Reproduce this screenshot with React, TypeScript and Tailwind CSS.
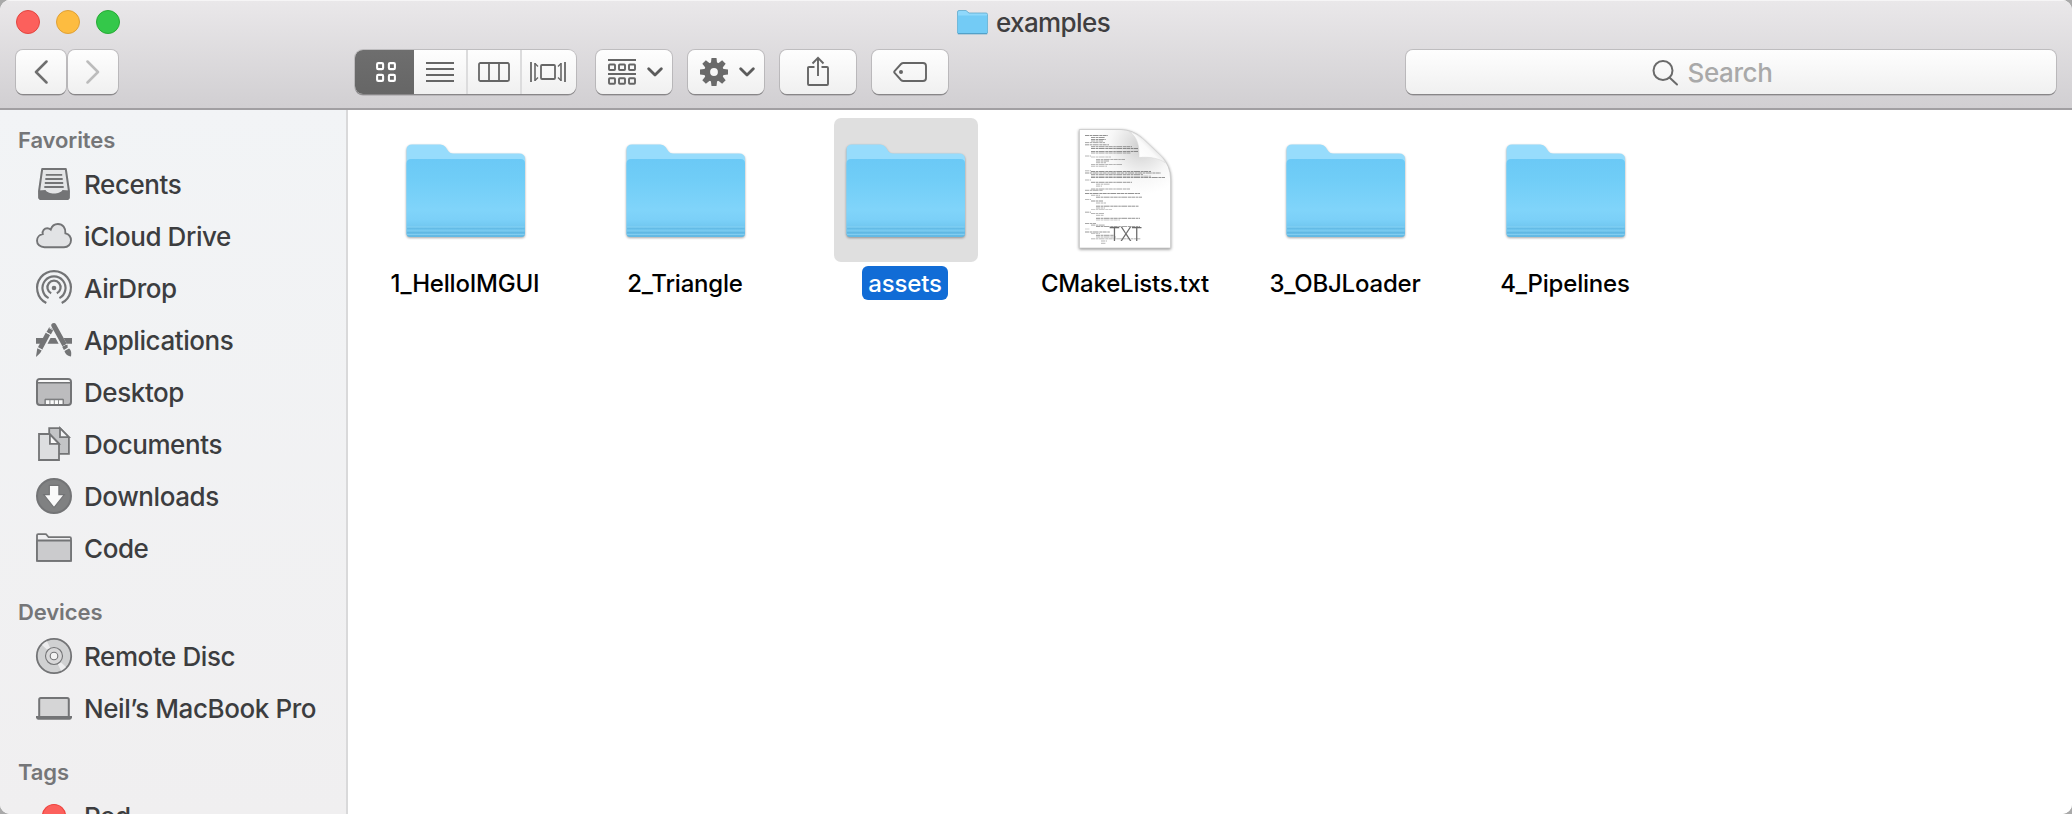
import type { ReactNode } from "react";

const G = "#737476";

function SideIcon({ children }: { children: ReactNode }) {
  return (
    <svg width="36" height="36" viewBox="0 0 36 36" fill="none" stroke={G} strokeWidth="2" className="shrink-0 overflow-visible">
      {children}
    </svg>
  );
}

const RecentsIcon = () => (
  <SideIcon>
    <path d="M6.2 2 H29.8 L32.8 23 L32.8 31 L31.5 32 H4.5 L3.2 31 V23 Z" fill="#e4e5e7" strokeLinejoin="round" />
    <path d="M2.2 23.5 L9.5 23 C11.5 27.6 24.5 27.6 26.5 23 L33.8 23.5 L33.4 30.5 Q33.2 33 31 33 H5 Q2.8 33 2.6 30.5 Z" fill={G} stroke="none" />
    <path d="M9.8 7.9 H26.2 M9.3 12 H26.7 M8.8 16 H27.2 M8.3 20 H27.7" strokeWidth="1.8" />
  </SideIcon>
);

const CloudIcon = () => (
  <SideIcon>
    <path d="M8.5 28.2 C4 28.2 1 25.3 1 21.7 C1 18.2 3.6 15.6 6.7 15.1 C6 11.5 8.5 9.3 11.2 9.3 C12.6 9.3 13.9 9.9 14.7 10.6 C15.9 7 18.6 5 21.9 5 C26.8 5 29.8 8.8 29.4 14.3 C32.9 15.2 35 18 35 21.3 C35 25.4 32 28.2 28 28.2 Z" fill="#e2e3e5" strokeWidth="1.9" />
  </SideIcon>
);

const AirDropIcon = () => (
  <SideIcon>
    <circle cx="18" cy="17" r="2.3" fill={G} stroke="none" />
    <g strokeWidth="2.2">
      <path d="M10.3 32 A16.9 16.9 0 1 1 25.7 32" />
      <path d="M12.6 27.1 A11.5 11.5 0 1 1 23.4 27.1" />
      <path d="M15.2 22.3 A6.6 6.6 0 1 1 20.8 22.3" />
    </g>
  </SideIcon>
);

const ApplicationsIcon = () => (
  <SideIcon>
    <path d="M0 15 H7.9 L4.9 20.7 H0 Z M14.5 15 H19.5 L22.6 20.7 H11.5 Z M27.6 15 H36 V20.7 H30.8 Z" fill={G} stroke="none" />
    <path d="M15.4 5.4 L12.7 10.3" strokeWidth="5" />
    <path d="M11.9 10.9 L4 25.6" strokeWidth="5" />
    <path d="M1.3 25.2 L5.7 27.6 L4.2 30 L0.4 33.8 L0 33.4 Z" fill={G} stroke="none" />
    <path d="M17.8 2.5 L29 22.8" strokeWidth="5" strokeLinecap="round" />
    <path d="M25.8 24 L31 21.2" stroke="#f3f4f6" strokeWidth="1" />
    <path d="M26.2 23.8 L30.2 21.8 L31.9 24.6 L27.9 26.9 Z M28.5 28 L33 25.6 C35.8 27.8 35.4 30.8 35 33.6 C32.4 33 29.3 31.6 28.5 28 Z" fill={G} stroke="none" />
    <path d="M13.3 4.9 L16.8 6.8 M10.7 9.5 L14.3 11.5 M1.9 24.5 L6 26.8" stroke="#f3f4f6" strokeWidth=".8" />
  </SideIcon>
);

const DesktopIcon = () => (
  <SideIcon>
    <rect x="1" y="4" width="34" height="26" rx="3" fill="#bcbcbe" />
    <path d="M2 7 Q2 5 4 5 H32 Q34 5 34 7 Z" fill="#fafafa" stroke="none" />
    <path d="M1 7.7 H35" strokeWidth="1.6" />
    <path d="M9 29 V24.2 H27.3 V29" strokeWidth="1" fill="#8b8c8e" />
    <path d="M9.9 25.2 h3.5 v3.9 h-3.5z M14.4 25.2 h3.4 v3.9 h-3.4z M18.8 25.2 h3.2 v3.9 h-3.2z M23 25.2 h3.5 v3.9 h-3.5z" fill="#fafafa" stroke="none" />
  </SideIcon>
);

const DocumentsIcon = () => (
  <SideIcon>
    <g strokeWidth="1.8">
      <path d="M13.2 1.2 H24 L32.9 10.4 V26.8 H13.2 Z" fill="#c3c4c6" />
      <path d="M24 1.2 V10.2 H32.9 Z" fill="#f3f4f6" />
      <path d="M3 7 H13.6 L23 16.6 V33 H3 Z" fill="#dddee0" />
      <path d="M13.9 7.4 V16.8 H23 Z" fill="#fafafa" />
    </g>
  </SideIcon>
);

const DownloadsIcon = () => (
  <SideIcon>
    <circle cx="18" cy="17" r="17" fill="#808182" />
    <path d="M13.3 6.3 H22.9 V15.7 H28.3 L18 28.6 L7.7 15.7 H13.3 Z" fill="#fafafa" stroke={G} strokeWidth="1.2" />
  </SideIcon>
);

const CodeIcon = () => (
  <SideIcon>
    <path d="M1 29.8 V4.3 Q1 3.2 2.1 3.2 H9.4 Q10.3 3.2 11 4.2 L12.6 6.2 H33.8 Q35 6.2 35 7.4 V29.8 Z" fill="#f0f0f2" strokeWidth="1.8" />
    <rect x="1" y="9.5" width="34" height="20.3" rx="1" fill="#cbcbcd" strokeWidth="1.8" />
  </SideIcon>
);

const DiscIcon = () => (
  <SideIcon>
    <circle cx="18" cy="18" r="17.2" fill="#d0d1d2" strokeWidth="1.8" />
    <path d="M18 18 L6 7 A16.3 16.3 0 0 1 11 3.3 Z M18 18 L30 29 A16.3 16.3 0 0 1 25 32.7 Z" fill="#ededee" stroke="none" />
    <circle cx="18" cy="18" r="8.5" fill="#d8d8d9" strokeWidth="1.1" />
    <circle cx="18" cy="18" r="3.8" fill="#f3f3f3" strokeWidth="1.1" />
  </SideIcon>
);

const LaptopIcon = () => (
  <SideIcon>
    <path d="M3.2 27 V9.6 Q3.2 8 4.8 8 H31.2 Q32.8 8 32.8 9.6 V27 Z" fill="#d5d5d6" />
    <path d="M0 26 H36 V27.6 Q35.6 29.8 33.6 29.8 H2.4 Q.4 29.8 0 27.6 Z" fill={G} stroke="none" />
  </SideIcon>
);

const RedTag = () => (
  <SideIcon>
    <circle cx="18" cy="18" r="11.5" fill="#fc605c" stroke="#ee443f" strokeWidth="1.2" />
  </SideIcon>
);

function Folder() {
  return (
    <svg width="120" height="94" viewBox="0 0 120 94" className="mt-px shrink-0 overflow-visible drop-shadow-[0_1px_1px_rgba(0,0,0,0.35)]">
      <defs>
        <linearGradient id="folderFront" x1="0" y1="0" x2="0" y2="1">
          <stop offset="0" stopColor="#6bc9f6" />
          <stop offset=".25" stopColor="#70cdf7" />
          <stop offset=".65" stopColor="#80d4fa" />
          <stop offset=".78" stopColor="#7bd0f8" />
          <stop offset=".88" stopColor="#70c6ef" />
          <stop offset="1" stopColor="#62b8e3" />
        </linearGradient>
      </defs>
      <path d="M0.500 90 V6 Q0.500 .5 6 .5 H34.500 Q37.500 .5 39.500 3 L42.500 7.500 Q44 9.500 47 9.500 H113 Q119 9.500 119 15 V90 Z" fill="#97dcfc" />
      <path d="M0.500 19.500 Q0.500 15 5 15 H114.500 Q119 15 119 19.500 V89.500 Q119 93 115.500 93 H4 Q0.500 93 0.500 89.500 Z" fill="url(#folderFront)" />
      <path d="M1 83 H118.500 M1 87 H118.500 M1 90.500 H118.500" stroke="#8fd6f5" strokeWidth=".9" opacity=".75" />
      <path d="M1 84.300 H118.500 M1 88.200 H118.500" stroke="#4ba6d3" strokeWidth=".8" opacity=".5" />
    </svg>
  );
}

const CODE_LINES: [number, number, number, number][] = [
  [6, 6.5, 23, 0.75], [12, 8.5, 14, 0.7], [12, 10.4, 15, 0.8], [12, 12, 12, 0.6], [6, 13.6, 20, 0.6],
  [6, 15.8, 24, 0.7], [12, 17.7, 41, 0.7], [12, 19.5, 47, 0.75], [12, 22.5, 47, 0.7], [12, 24, 40, 0.6],
  [6, 27, 6, 0.5], [12, 28, 20, 0.4], [17, 30.4, 29, 0.6], [17, 32, 13, 0.6], [17, 33.7, 10, 0.5],
  [12, 35.6, 31, 0.55], [12, 37.2, 16, 0.5], [6, 41.8, 6, 0.5], [12, 42.5, 60, 0.75], [6, 44, 76, 0.7],
  [12, 45.5, 52, 0.6], [12, 47.2, 60, 0.5], [12, 48.6, 74, 0.8], [6, 51, 6, 0.5], [12, 53.3, 41, 0.7],
  [17, 55.2, 14, 0.5], [17, 57.1, 6, 0.5], [12, 60, 39, 0.6], [6, 61.3, 18, 0.6], [6, 64.5, 55, 0.75],
  [12, 66.3, 9, 0.5], [17, 68.2, 46, 0.7], [6, 70.6, 6, 0.5], [12, 72, 12, 0.7], [17, 74, 10, 0.5],
  [17, 77.2, 43, 0.75], [17, 79, 9, 0.5], [12, 80.6, 21, 0.4], [6, 83.2, 6, 0.6], [12, 84.5, 13, 0.5],
  [17, 86.3, 8, 0.5], [17, 89.3, 44, 0.75], [17, 91, 24, 0.4], [6, 94.5, 11, 0.6], [12, 96.1, 14, 0.6],
  [17, 97.6, 44, 0.7], [6, 100, 5, 0.3], [6, 103, 25, 0.7], [12, 104.5, 9, 0.4], [17, 106.3, 18, 0.7],
  [17, 108, 20, 0.5], [12, 109.8, 50, 0.5], [22, 112, 6, 0.5], [22, 114.3, 5, 0.5],
];

function TextDocument() {
  return (
    <svg width="92" height="120" viewBox="0 0 92 120" className="-mt-0.5 mr-0.5 shrink-0 overflow-visible drop-shadow-[0_1px_1.5px_rgba(0,0,0,0.45)]">
      <defs>
        <radialGradient id="pageShade" cx="62" cy="18" r="48" gradientUnits="userSpaceOnUse">
          <stop offset="0" stopColor="#cdcdcd" />
          <stop offset=".3" stopColor="#e2e2e2" />
          <stop offset=".65" stopColor="#f7f7f7" />
          <stop offset="1" stopColor="#ffffff" />
        </radialGradient>
        <linearGradient id="curl" x1="60" y1="28" x2="74" y2="14" gradientUnits="userSpaceOnUse">
          <stop offset="0" stopColor="#ffffff" />
          <stop offset=".6" stopColor="#fafafa" />
          <stop offset="1" stopColor="#dedede" />
        </linearGradient>
        <clipPath id="pageClip">
          <path d="M0 0 H44 Q60 2 60 28 Q87 27 92 46 V119 H0 Z" />
        </clipPath>
      </defs>
      <path d="M.4 .5 H42 Q54 1 63 9 L83 28 Q91.500 37 91.600 50 V119 H.4 Z" fill="url(#pageShade)" stroke="#c9c9c9" strokeWidth=".8" />
      <g clipPath="url(#pageClip)" stroke="#4a4a4a" strokeWidth=".8">
        {CODE_LINES.map(([x, y, w, o]) => (
          <path key={y} d={`M${x} ${y} h${w}`} opacity={o} strokeDasharray="4 .6 2.5 .5 6 .7 3 .4" />
        ))}
      </g>
      <path d="M50 2.500 C59 8 60.500 18 60 28.500 C70 27.500 80 29 86.500 34 Q85 30 82 27 L64 10 Q57 4 50 2.500 Z" fill="url(#curl)" stroke="#d4d4d4" strokeWidth=".5" />
      <text x="46.500" y="111.800" textAnchor="middle" fontSize="18" fontFamily="Inter, sans-serif" fontWeight="300" letterSpacing="-.2" fill="#6b6b6b">TXT</text>
    </svg>
  );
}

const BTN =
  "flex h-11 items-center justify-center bg-gradient-to-b from-[#fefefe] to-[#f0f0f0] shadow-[0_0_0_1px_rgba(0,0,0,0.14),0_1.5px_0.5px_rgba(0,0,0,0.25)]";

const Chevron = () => (
  <svg width="16" height="10" viewBox="0 0 16 10" fill="none" stroke="#5b5b5b" strokeWidth="2.8" strokeLinecap="round" strokeLinejoin="round">
    <path d="M1.700 1.700 L8 8 L14.300 1.700" />
  </svg>
);

function Toolbar() {
  return (
    <div className="flex items-start pt-1.5 pl-4 pr-4">
      <div className="flex gap-0.5">
        <button className={`${BTN} w-[50px] rounded-[7px] pr-px`}>
          <svg width="14" height="24" viewBox="0 0 14 24" fill="none" stroke="#6f6f6f" strokeWidth="2.5" strokeLinecap="round" strokeLinejoin="round">
            <path d="M12.500 1.500 L2 12 L12.500 22.500" />
          </svg>
        </button>
        <button className={`${BTN} w-[50px] rounded-[7px]`}>
          <svg width="14" height="24" viewBox="0 0 14 24" fill="none" stroke="#bcbcbc" strokeWidth="2.5" strokeLinecap="round" strokeLinejoin="round">
            <path d="M1.500 1.500 L12 12 L1.500 22.500" />
          </svg>
        </button>
      </div>

      <div className={`${BTN} ml-[237px] w-[221px] overflow-hidden rounded-[8px]`}>
        <div className="flex h-11 w-[59px] items-center justify-center bg-gradient-to-b from-[#6e6e6e] to-[#666666] pl-[3px]">
          <svg width="20" height="20" viewBox="0 0 20 20" fill="none" stroke="#fff" strokeWidth="2.1">
            <rect x="1.100" y="1.100" width="6" height="6" rx="1.200" />
            <rect x="12.900" y="1.100" width="6" height="6" rx="1.200" />
            <rect x="1.100" y="12.900" width="6" height="6" rx="1.200" />
            <rect x="12.900" y="12.900" width="6" height="6" rx="1.200" />
          </svg>
        </div>
        <div className="flex h-11 w-[54px] items-center justify-center border-r-2 border-[#dcdcdd]">
          <svg width="28" height="20" viewBox="0 0 28 20" stroke="#666" strokeWidth="1.800">
            <path d="M0 1 H28 M0 7 H28 M0 13 H28 M0 19 H28" />
          </svg>
        </div>
        <div className="flex h-11 w-[54px] items-center justify-center border-r-2 border-[#dcdcdd]">
          <svg width="32" height="20" viewBox="0 0 32 20" fill="none" stroke="#666" strokeWidth="1.800">
            <rect x="1" y="1" width="30" height="18" rx="1.500" />
            <path d="M11 1 V19 M21 1 V19" />
          </svg>
        </div>
        <div className="flex h-11 w-[54px] items-center justify-center pr-0.5">
          <svg width="36" height="20" viewBox="0 0 36 20" fill="none" stroke="#666" strokeWidth="1.800">
            <rect x="11" y="3" width="14" height="14" rx="1" />
            <path d="M1 0 V20 M35 0 V20" />
            <path d="M5 1 V19 M31 1 V19" strokeWidth="1.600" />
            <path d="M5 1.500 L8 4.500 M5 18.500 L8 15.500 M31 1.500 L28 4.500 M31 18.500 L28 15.500" strokeWidth="1.300" />
          </svg>
        </div>
      </div>

      <div className={`${BTN} ml-[20px] w-[76px] gap-[11px] rounded-[7px] pl-[2px]`}>
        <svg width="28" height="26" viewBox="0 0 28 26" fill="none" stroke="#666" strokeWidth="1.900">
          <path d="M0 1 H28 M0 15 H28" />
          <rect x="1" y="5.500" width="6" height="5.500" rx=".8" />
          <rect x="11" y="5.500" width="6" height="5.500" rx=".8" />
          <rect x="21" y="5.500" width="6" height="5.500" rx=".8" />
          <rect x="1" y="19.200" width="6" height="5.500" rx=".8" />
          <rect x="11" y="19.200" width="6" height="5.500" rx=".8" />
          <rect x="21" y="19.200" width="6" height="5.500" rx=".8" />
        </svg>
        <Chevron />
      </div>

      <div className={`${BTN} ml-4 w-[76px] gap-[11px] rounded-[7px] pl-[2px]`}>
        <svg width="28" height="28" viewBox="-14 -14 28 28">
          <g fill="#6a6a6a">
            {[0, 45, 90, 135, 180, 225, 270, 315].map((a) => (
              <path key={a} d="M-3.200 -8 L-2.500 -14 H2.500 L3.200 -8 Z" transform={`rotate(${a})`} />
            ))}
          </g>
          <circle r="6.900" fill="none" stroke="#6a6a6a" strokeWidth="6" />
        </svg>
        <Chevron />
      </div>

      <div className={`${BTN} ml-4 w-[76px] rounded-[7px]`}>
        <svg width="22" height="30" viewBox="0 0 22 30" fill="none" stroke="#666" strokeWidth="1.900" className="-mt-0.5">
          <path d="M7.500 11 H2 Q1 11 1 12 V28 Q1 29 2 29 H20 Q21 29 21 28 V12 Q21 11 20 11 H14.500" />
          <path d="M11 20 V2 M5.500 7.500 L11 1.800 L16.500 7.500" />
        </svg>
      </div>

      <div className={`${BTN} ml-4 w-[76px] rounded-[7px]`}>
        <svg width="34" height="20" viewBox="0 0 34 20" fill="none" stroke="#666" strokeWidth="1.900">
          <path d="M10.500 1 H30 Q33 1 33 4 V16 Q33 19 30 19 H10.500 Q9 19 8 18 L1.600 11 Q.8 10 1.600 9 L8 2 Q9 1 10.500 1 Z" />
          <circle cx="8" cy="10" r="2" fill="#666" stroke="none" />
        </svg>
      </div>

      <div className={`${BTN} ml-auto w-[650px] rounded-[7px] pr-[38px]`}>
        <svg width="27" height="26" viewBox="0 0 27 26" fill="none" stroke="#6a6a6a" strokeWidth="2" strokeLinecap="round" className="mt-0.5">
          <circle cx="11" cy="10.500" r="9.500" />
          <path d="M17.500 17.500 L25 24.500" />
        </svg>
        <span className="mt-0.5 ml-[9px] text-[26px] leading-none font-[450] tracking-[-0.4px] text-[#a9a9a9]">Search</span>
      </div>
    </div>
  );
}

function SideHeader({ children, className }: { children: ReactNode; className: string }) {
  return <div className={`flex items-center pl-[18px] text-[22px] leading-none font-semibold tracking-[-0.1px] text-[#757678] ${className}`}>{children}</div>;
}

function SideRow({ icon, children, className = "" }: { icon: ReactNode; children: ReactNode; className?: string }) {
  return (
    <div className="flex h-[52px] shrink-0 items-center gap-[12px] pl-9 text-[26px] leading-none font-[450] tracking-[-0.42px] whitespace-nowrap text-[#3c3d3f]">
      {icon}
      <span className={className}>{children}</span>
    </div>
  );
}

function FileItem({ name, icon, selected = false }: { name: string; icon: ReactNode; selected?: boolean }) {
  return (
    <div className="flex w-[220px] flex-col items-center">
      <div className={`flex h-36 w-36 items-center justify-center rounded-[7px] ${selected ? "bg-[#dfdfdf]" : ""}`}>{icon}</div>
      <div
        className={`mt-1 mr-0.5 flex h-[34px] items-center rounded-[6px] pt-0.5 text-[24px] leading-none whitespace-nowrap ${
          selected ? "bg-[#116cd6] px-[6px] font-medium tracking-[-0.2px] text-white" : "font-[450] tracking-[-0.2px] text-black"
        }`}
      >
        {name}
      </div>
    </div>
  );
}

export default function App() {
  return (
    <div className="h-[814px] w-[2072px] overflow-hidden bg-[#a9a9a9] font-['Inter',sans-serif]">
      <div className="flex h-full w-full flex-col overflow-hidden rounded-[10px] bg-white">
        <header className="h-[110px] shrink-0 border-b-2 border-[#a19fa2] bg-gradient-to-b from-[#eae8ea] to-[#d1cfd2] shadow-[inset_0_1px_0_#f6f5f6]">
          <div className="grid h-11 grid-cols-[1fr_auto_1fr] items-center">
            <div className="flex gap-4 pl-4">
              <span className="h-6 w-6 rounded-full border border-[#e2453f] bg-[#fc605c]" />
              <span className="h-6 w-6 rounded-full border border-[#dfa036] bg-[#fdbc40]" />
              <span className="h-6 w-6 rounded-full border border-[#27aa35] bg-[#34c84a]" />
            </div>
            <div className="flex items-center gap-[8px] pr-[5px]">
              <svg width="31" height="25" viewBox="0 0 31 25">
                <path d="M.5 23 V2 Q.5 .5 2 .5 H9 L12 3 H29 Q30.500 3 30.500 4.500 V23 Z" fill="#8fd8fb" stroke="#5fa9cc" strokeWidth=".8" />
                <path d="M.8 5.500 H30.200 V22.500 Q30.200 24 28.700 24 H2.300 Q.8 24 .8 22.500 Z" fill="#73cbf5" />
                <path d="M.8 23.700 H30.200" stroke="#4f9cc4" strokeWidth="1.200" />
              </svg>
              <span className="pt-0.5 text-[26px] leading-none font-[450] tracking-[-0.6px] text-[#3f3e40]">examples</span>
            </div>
            <div />
          </div>
          <Toolbar />
        </header>

        <div className="flex min-h-0 flex-1">
          <aside className="flex w-[348px] shrink-0 flex-col overflow-hidden border-r-2 border-[#d9d9da] bg-gradient-to-b from-[#f2f4f6] to-[#f0eff0]">
            <SideHeader className="mt-[11px] h-[38px] shrink-0">Favorites</SideHeader>
            <SideRow icon={<RecentsIcon />}>Recents</SideRow>
            <SideRow icon={<CloudIcon />}>iCloud Drive</SideRow>
            <SideRow icon={<AirDropIcon />}>AirDrop</SideRow>
            <SideRow icon={<ApplicationsIcon />}>Applications</SideRow>
            <SideRow icon={<DesktopIcon />}>Desktop</SideRow>
            <SideRow icon={<DocumentsIcon />}>Documents</SideRow>
            <SideRow icon={<DownloadsIcon />}>Downloads</SideRow>
            <SideRow icon={<CodeIcon />}>Code</SideRow>
            <SideHeader className="mt-[19px] h-9 shrink-0">Devices</SideHeader>
            <SideRow className="pt-px" icon={<DiscIcon />}>Remote Disc</SideRow>
            <SideRow className="pt-px" icon={<LaptopIcon />}>Neil’s MacBook Pro</SideRow>
            <SideHeader className="mt-5 h-9 shrink-0">Tags</SideHeader>
            <SideRow className="pt-px" icon={<RedTag />}>Red</SideRow>
          </aside>

          <main className="flex flex-1 items-start bg-white pt-2 pl-2">
            <FileItem name="1_HelloIMGUI" icon={<Folder />} />
            <FileItem name="2_Triangle" icon={<Folder />} />
            <FileItem name="assets" icon={<Folder />} selected />
            <FileItem name="CMakeLists.txt" icon={<TextDocument />} />
            <FileItem name="3_OBJLoader" icon={<Folder />} />
            <FileItem name="4_Pipelines" icon={<Folder />} />
          </main>
        </div>
      </div>
    </div>
  );
}
